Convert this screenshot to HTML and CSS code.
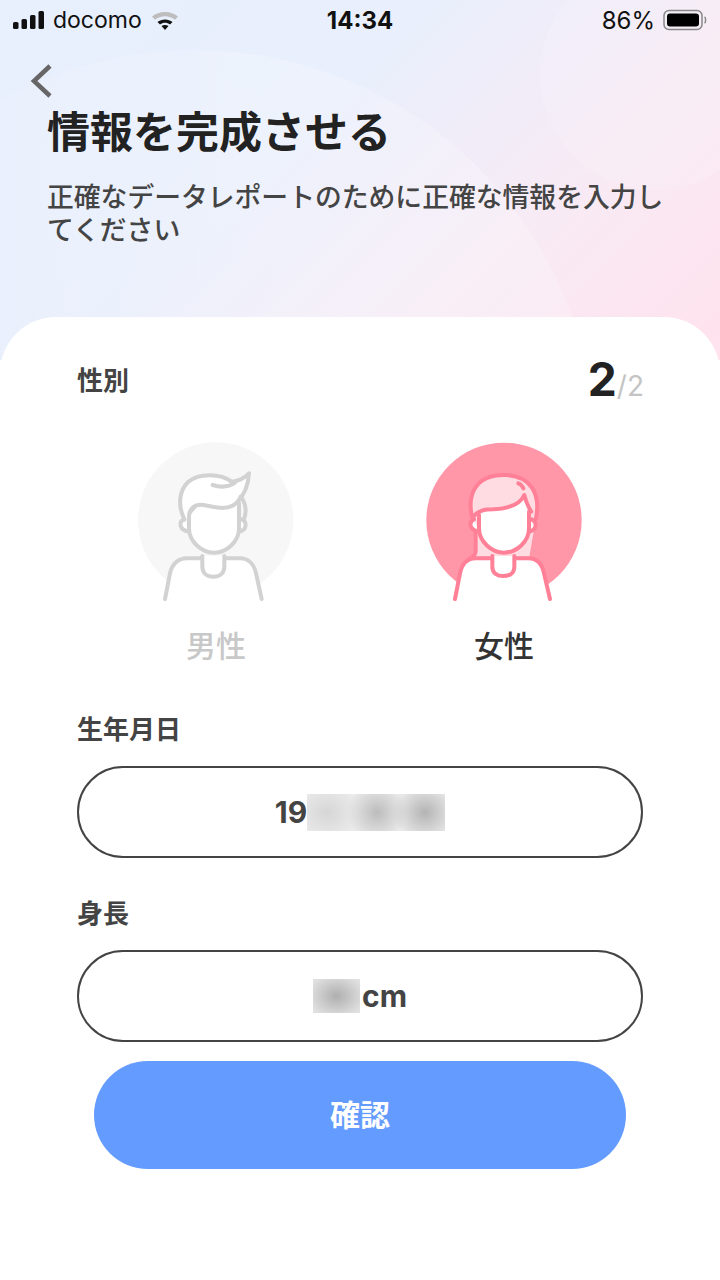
FILE: index.html
```html
<!DOCTYPE html>
<html lang="ja">
<head>
  <meta charset="utf-8">
  <title>情報を完成させる</title>
  <meta name="viewport" content="width=device-width, initial-scale=1">
  <link rel="stylesheet" href="styles.css">
</head>
<body>
  <div class="page">
    <div class="bg-circle bg-circle-big"></div>
    <div class="bg-circle bg-circle-small"></div>

    <header class="top">
      <div class="status">
        <div class="status-left">
          <svg class="signal" width="32" height="18" viewBox="0 0 32 18">
            <rect x="0" y="11" width="5.5" height="7" rx="1.5"/>
            <rect x="8.5" y="8" width="5.5" height="10" rx="1.5"/>
            <rect x="17" y="4" width="5.5" height="14" rx="1.5"/>
            <rect x="25.5" y="0" width="5.5" height="18" rx="1.5"/>
          </svg>
          <span class="carrier">docomo</span>
          <svg class="wifi" width="28" height="20" viewBox="0 0 28 20">
            <path d="M1 6.5C8 0.5 20 0.5 27 6.5L24 9.8C18.500 5 9.500 5 4 9.800Z" fill="#bdbdbd"/>
            <path d="M6.500 12C10.500 8.500 17.500 8.500 21.500 12L19 14.600C16 12.200 12 12.200 9 14.600Z" fill="#111"/>
            <path d="M10.500 16C12.500 14.500 15.500 14.500 17.500 16L14 20Z" fill="#111"/>
          </svg>
        </div>
        <div class="clock">14:34</div>
        <div class="status-right">
          <span>86%</span>
          <svg width="44" height="22" viewBox="0 0 44 22">
            <rect x="1" y="1.500" width="38" height="19" rx="5" fill="none" stroke="#888" stroke-width="1.500"/>
            <rect x="4" y="4.500" width="32" height="13" rx="3" fill="#000"/>
            <path d="M41.500 8C43 8.500 43 13.500 41.500 14" fill="none" stroke="#888" stroke-width="1.500"/>
          </svg>
        </div>
      </div>
      <svg class="back" width="24" height="34" viewBox="0 0 24 34">
        <path d="M20 2L4 17L20 32" fill="none" stroke="#666" stroke-width="4.500"/>
      </svg>
      <h1 class="title">情報を完成させる</h1>
      <p class="subtitle">正確なデータレポートのために正確な情報を入力してください</p>
    </header>

    <main class="card">
      <div class="row-head">
        <span class="label">性別</span>
        <span class="count"><b>2</b><i>/2</i></span>
      </div>

      <div class="genders">
        <div class="gender">
          <svg class="avatar avatar-male" width="190" height="190" viewBox="3 0 570 570">
            <circle class="disc" cx="287" cy="270" r="233"/>
            <!-- body -->
            <path class="skin" d="M200 385H360C385 385 402 402 408 430L425 507H135L150 430C156 402 175 385 200 385Z"/>
            <path class="line" fill="none" d="M135 507L150 430C156 402 175 385 200 385H360C385 385 402 402 408 430L425 507"/>
            <path class="line skin" d="M247 378V410C247 430 262 440 280 440C298 440 313 430 313 410V378"/>
            <path class="line skin" d="M192 268C176 275 176 300 207 305M365 268C382 275 382 300 357 305"/>
            <path class="line skin" d="M207 250V295C207 335 245 368 282 368C320 368 357 335 357 295V220L250 200Z"/>
            <path class="line skin" d="M193 268C172 225 178 180 205 155C235 130 300 128 335 155C350 155 375 145 387 130C385 170 368 200 350 218C320 245 285 230 250 225C225 222 207 235 207 262"/>
            <path class="line" fill="none" d="M278 165C300 172 325 172 345 158M362 200C378 220 380 245 372 268"/>
          </svg>
          <div class="gender-name name-off">男性</div>
        </div>
        <div class="gender">
          <svg class="avatar avatar-female" width="190" height="190" viewBox="-3 0 570 570">
            <circle class="disc" cx="282" cy="271" r="233"/>
            <path class="hair" d="M190 265C170 195 195 135 282 135C365 135 392 195 378 265L358 380H197V300Z"/>
            <!-- body -->
            <path class="skin" d="M197 385H355C380 385 396 402 402 430L420 507H135L150 430C156 402 172 385 197 385Z"/>
            <path class="line" fill="none" d="M135 507L150 430C156 402 172 385 197 385H245M315 385H355C380 385 396 402 402 430L420 507"/>
            <path class="line skin" d="M247 378V410C247 430 262 438 280 438C298 438 313 430 313 410V378"/>
            <path class="line skin" d="M192 268C176 275 176 300 207 305M365 268C382 275 382 300 357 305"/>
            <!-- face fill follows the fringe, so no stroke along its top -->
            <path class="skin" d="M207 250V295C207 335 245 368 282 368C320 368 357 335 357 295V240L343 195C330 225 290 236 250 238Z"/>
            <path class="line" fill="none" d="M207 255V295C207 335 245 368 282 368C320 368 357 335 357 295V245"/>
            <path class="line" fill="none" d="M187 265C170 195 195 135 282 135C365 135 392 195 378 265M188 262C205 240 225 238 250 238C290 236 330 225 343 195C348 215 352 228 364 245M197 305V362C197 372 192 380 178 386M325 160C332 162 337 168 340 175"/>
          </svg>
          <div class="gender-name">女性</div>
        </div>
      </div>

      <div class="label field-label first">生年月日</div>
      <div class="field">19<span class="blur blur-date"></span></div>

      <div class="label field-label">身長</div>
      <div class="field"><span class="blur blur-height"></span>cm</div>

      <button type="button" class="confirm">確認</button>
    </main>
  </div>
</body>
</html>
```

FILE: styles.css
```css
* {
  box-sizing: border-box;
}
body {
  margin: 0;
  font-family: "Noto Sans CJK JP", "Noto Sans", sans-serif;
  color: #222;
}
.page {
  position: relative;
  width: 720px;
  height: 1280px;
  overflow: hidden;
  background: linear-gradient(135deg, #e8f0fd 0%, #e9effc 40%, #f8eaf4 72%, #ffe2ed 100%) no-repeat;
  background-size: 720px 360px;
}
.bg-circle {
  position: absolute;
  border-radius: 50%;
}
.bg-circle-big {
  left: -205px;
  top: 50px;
  width: 800px;
  height: 800px;
  background: linear-gradient(to right, rgba(255, 255, 255, 0) 15%, rgba(255, 255, 255, 0.2) 60%);
}
.bg-circle-small {
  left: 540px;
  top: -40px;
  width: 230px;
  height: 230px;
  background: rgba(255, 255, 255, 0.14);
}

.top {
  position: relative;
  height: 317px;
}
.status {
  display: grid;
  grid-template-columns: 1fr auto 1fr;
  align-items: center;
  height: 40px;
  padding: 0 13px;
  font-family: Inter, "Liberation Sans", sans-serif;
  font-size: 23px;
  color: #111;
}
.status-left {
  display: flex;
  align-items: center;
}
.signal {
  fill: #111;
}
.carrier {
  margin-left: 8px;
}
.wifi {
  margin-left: 9px;
}
.clock {
  font-size: 24px;
  font-weight: 700;
}
.status-right {
  display: flex;
  align-items: center;
  justify-content: flex-end;
  gap: 8px;
  font-size: 24px;
}
.back {
  display: block;
  margin: 24px 0 0 30px;
}
.title {
  margin: 10px 0 0 47px;
  font-size: 43px;
  line-height: 42px;
  font-weight: 700;
  color: #222;
}
.subtitle {
  margin: 29px 50px 0 47px;
  font-size: 26.800px;
  line-height: 33px;
  font-weight: 500;
  color: #444;
}

.card {
  position: relative;
  height: 963px;
  padding: 44px 77px 0;
  background: #fff;
  border-radius: 56px 56px 0 0;
}
.row-head {
  display: flex;
  align-items: center;
  justify-content: space-between;
  height: 36px;
}
.label {
  font-size: 26px;
  line-height: 36px;
  font-weight: 700;
  color: #444;
}
.count {
  font-family: Inter, "Liberation Sans", sans-serif;
  display: flex;
  align-items: baseline;
  margin-right: -1px;
}
.count b {
  font-size: 46px;
  font-weight: 700;
  color: #222;
}
.count i {
  font-size: 28px;
  font-weight: 400;
  font-style: normal;
  color: #c4c4c4;
}

.genders {
  display: grid;
  grid-template-columns: 1fr 1fr;
  gap: 10px;
  margin-top: 33px;
}
.gender {
  display: flex;
  flex-direction: column;
  align-items: center;
}
.avatar {
  display: block;
}
.line {
  stroke-width: 12;
  stroke-linecap: round;
  stroke-linejoin: round;
}
.skin {
  fill: #fff;
}
.avatar-male .disc {
  fill: #f7f7f7;
}
.avatar-male .line {
  stroke: #d2d2d2;
}
.avatar-female .disc {
  fill: #ff97a9;
}
.avatar-female .line {
  stroke: #ff8097;
}
.avatar-female .hair {
  fill: #ffdbe2;
}
.gender-name {
  margin-top: 4px;
  font-size: 30px;
  line-height: 40px;
  font-weight: 500;
  color: #333;
}
.name-off {
  color: #c8c8c8;
}

.field-label {
  margin-top: 36px;
  margin-bottom: 20px;
}
.field-label.first {
  margin-top: 46px;
}
.field {
  display: flex;
  align-items: center;
  justify-content: center;
  height: 92px;
  border: 2.500px solid #444;
  border-radius: 46px;
  font-family: Inter, "Liberation Sans", sans-serif;
  font-size: 30px;
  font-weight: 700;
  color: #444;
}
.blur {
  display: block;
}
.blur-date {
  width: 138px;
  height: 37px;
  background:
    radial-gradient(ellipse 34px 30px at 20px 50%, #d6d6d6, transparent),
    radial-gradient(ellipse 30px 30px at 70px 50%, #bcbcbc, transparent),
    radial-gradient(ellipse 32px 30px at 118px 50%, #b4b4b4, transparent),
    #ececec;
}
.blur-height {
  width: 47px;
  height: 34px;
  margin-right: 2px;
  background: radial-gradient(ellipse 28px 22px at 50% 50%, #afafaf, #e0e0e0);
}
.confirm {
  display: block;
  width: 532px;
  height: 108px;
  margin: 19px 0 0 17px;
  padding: 0 0 4px;
  border: none;
  border-radius: 54px;
  background: #639bff;
  color: #fff;
  font-family: "Noto Sans CJK JP", sans-serif;
  font-size: 30px;
  font-weight: 700;
}
```
